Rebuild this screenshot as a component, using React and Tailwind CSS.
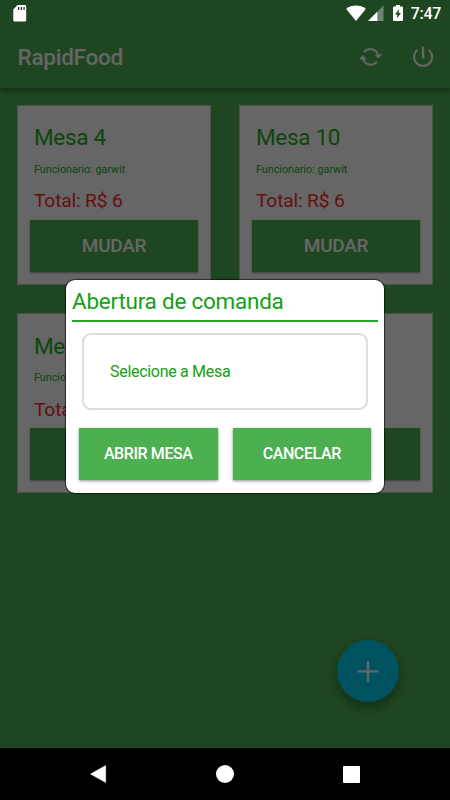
const mesas = [
    { id: 1, nome: 'Mesa 4', funcionario: 'garwit', total: 6 },
    { id: 2, nome: 'Mesa 10', funcionario: 'garwit', total: 6 },
    { id: 3, nome: 'Mesa 7', funcionario: 'garwit', total: 6 },
    { id: 4, nome: '', funcionario: '', total: null },
];

function StatusBar() {
    return (
        <div className="absolute inset-x-0 top-0 z-20 flex h-[27px] items-center pl-[13px] pr-[9px] text-white">
            <svg className="h-[18px] w-[14px]" viewBox="0 0 14 18" fill="currentColor">
                <path d="M4.600 0H12a1.200 1.200 0 0 1 1.200 1.200v14a1.200 1.200 0 0 1-1.200 1.200H1.500A1.200 1.200 0 0 1 .3 15.200V4.400Z" />
                <path d="M5 2h1.300v3H5zM7.700 2H9v3H7.700zM10.400 2h1.300v3h-1.300z" fill="#1e4620" />
            </svg>
            <svg className="ml-auto h-[17px] w-[20px]" viewBox="0 0 20 17" fill="currentColor">
                <path d="M10 16 .2 3.900C3 1.700 6.400.6 10 .6s7 1.100 9.800 3.300Z" />
            </svg>
            <svg className="ml-[2px] h-[17px] w-[16px]" viewBox="0 0 16 17" fill="currentColor">
                <path d="M15.500 .5v15.500H0Z" opacity=".35" />
                <path d="M9.300 6.700v9.300H0Z" />
            </svg>
            <svg className="ml-[9px] h-[17px] w-[10px]" viewBox="0 0 10 17" fill="currentColor">
                <path d="M3 0h4v1.400h2a1 1 0 0 1 1 1v12.700a1 1 0 0 1-1 1H1a1 1 0 0 1-1-1V2.400a1 1 0 0 1 1-1h2Z" />
                <path d="M6.100 3.900 2 9.500h2.400L3.900 13.600 8 8H5.600Z" fill="#1e4620" />
            </svg>
            <span className="ml-[8px] pt-px text-[16px] font-medium leading-none tracking-[-0.3px]">7:47</span>
        </div>
    );
}

function Header() {
    return (
        <header className="z-10 flex h-[88px] shrink-0 items-center bg-[#4caf50] pl-[17.5px] pr-[15px] pt-[27px] text-white shadow-[0_2px_5px_rgba(0,0,0,0.4)]">
            <h1 className="text-[22.5px] font-medium leading-none tracking-[-0.25px]">RapidFood</h1>
            <svg className="ml-auto h-6 w-6" viewBox="0 0 24 24" fill="none" stroke="currentColor" strokeWidth="2">
                <path d="M5 6.200A8 8 0 0 1 19 8.800" />
                <path d="M18 15.600A8 8 0 0 1 4 12.800" />
                <path d="M15.800 8.900 23 7.800l-3.200 4.800Z" fill="currentColor" stroke="none" />
                <path d="m.2 13.500 3.200-4.500 4.300 4.600Z" fill="currentColor" stroke="none" />
            </svg>
            <svg className="ml-[28px] h-6 w-6" viewBox="0 0 24 24" fill="none" stroke="currentColor" strokeWidth="2">
                <path d="M6.500 3.800a9 9 0 1 0 11.200 0" />
                <path d="M12.100.7v11.800" strokeWidth="2.400" />
            </svg>
        </header>
    );
}

function MesaCard({ mesa }) {
    return (
        <div className="flex h-[180px] flex-col border border-[#b9d3ba] bg-white px-[12px] pb-[12px]">
            <div className="flex-1 pl-[4px]">
                <p className="mt-[16.5px] h-[30px] text-[22.5px] leading-[30px] tracking-[-0.3px] text-[#1eae20]">{mesa.nome}</p>
                <p className="mt-[10.5px] h-[14px] text-[10.75px] leading-[14px] text-[#1eae20]">
                    {mesa.funcionario && `Funcionario: ${mesa.funcionario}`}
                </p>
                <p className="mt-[12.5px] h-[24px] text-[19.25px] leading-[24px] tracking-[-0.2px] text-[#ff2a2a]">
                    {mesa.total !== null && `Total: R$ ${mesa.total}`}
                </p>
            </div>
            <button className="h-[52px] bg-[#4caf50] pt-px text-[19px] font-medium tracking-[-0.3px] text-white shadow-[0_1px_2px_rgba(0,0,0,0.4)]">
                MUDAR
            </button>
        </div>
    );
}

function AbrirMesaDialog() {
    return (
        <div className="absolute inset-x-0 top-0 z-10 flex h-[748px] justify-center bg-black/60 pt-[280px]">
            <div className="flex h-[213px] w-[318px] flex-col rounded-[9px] bg-white px-[6px] shadow-[0_0_1px_1px_rgba(0,0,0,0.6)]">
                <h2 className="h-[42px] border-b-2 border-[#26a628] text-[22.5px] leading-[43px] tracking-[-0.25px] text-[#13a013]">
                    Abertura de comanda
                </h2>
                <div className="mx-[10px] mt-[11px] flex h-[77px] items-center rounded-[9px] border-2 border-[#dcdcdc] pl-[26px] pt-px text-[16px] tracking-[-0.3px] text-[#13a013]">
                    Selecione a Mesa
                </div>
                <div className="mx-[7px] mt-[18px] grid grid-cols-2 gap-[15px]">
                    <button className="h-[52px] bg-[#4caf50] text-[16px] font-medium tracking-[-0.4px] text-white shadow-[0_1px_3px_rgba(0,0,0,0.45)]">
                        ABRIR MESA
                    </button>
                    <button className="h-[52px] bg-[#4caf50] text-[16px] font-medium tracking-[-0.4px] text-white shadow-[0_1px_3px_rgba(0,0,0,0.45)]">
                        CANCELAR
                    </button>
                </div>
            </div>
        </div>
    );
}

function NavBar() {
    return (
        <nav className="flex h-[52px] shrink-0 items-center justify-between bg-black pl-[89px] pr-[90px] text-white">
            <svg className="h-[18px] w-[18px]" viewBox="0 0 18 18" fill="currentColor">
                <path d="M16.700 .5v17L1.500 9Z" stroke="currentColor" strokeWidth=".5" strokeLinejoin="round" />
            </svg>
            <div className="h-[18px] w-[18px] rounded-full bg-white" />
            <div className="h-[17px] w-[17px] rounded-[1px] bg-white" />
        </nav>
    );
}

export default function App() {
    return (
        <div className="relative flex h-[800px] w-[450px] flex-col overflow-hidden bg-[#4caf50] font-[Roboto,sans-serif]">
            <StatusBar />
            <Header />
            <main className="relative flex-1">
                <div className="grid grid-cols-2 gap-x-[28px] gap-y-[28.5px] px-[17px] pt-[16.5px]">
                    {mesas.map((mesa) => (
                        <MesaCard key={mesa.id} mesa={mesa} />
                    ))}
                </div>
                <button className="absolute bottom-[46px] right-[51px] flex h-[62px] w-[62px] items-center justify-center rounded-full bg-[#00cdef] text-white shadow-[0_5px_12px_rgba(0,0,0,0.35)]">
                    <svg className="h-[22px] w-[22px]" viewBox="0 0 22 22" stroke="currentColor" strokeWidth="2.400">
                        <path d="M.7 11.400h20.600M11 1.100v20.600" />
                    </svg>
                </button>
            </main>
            <NavBar />
            <AbrirMesaDialog />
        </div>
    );
}
